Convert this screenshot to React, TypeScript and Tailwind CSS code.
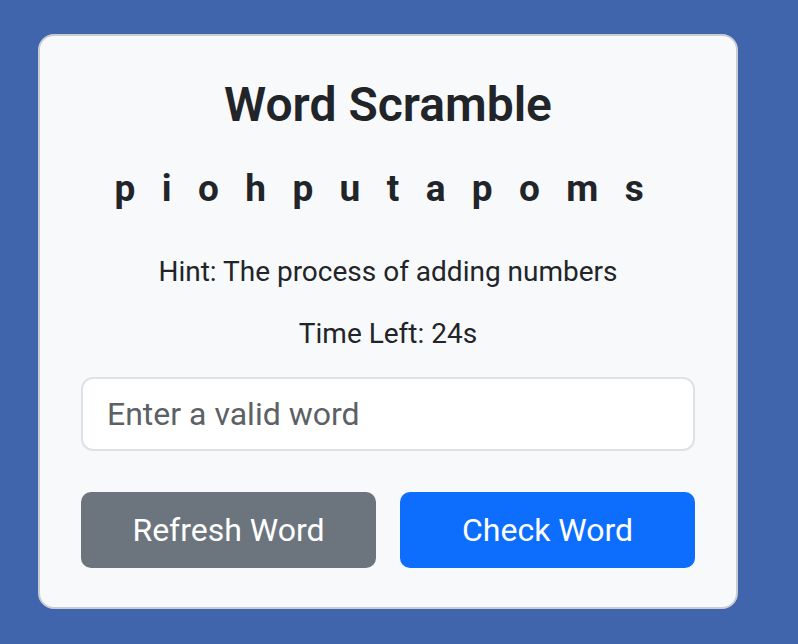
import { useState } from 'react';

const scrambled = 'piohputapoms';

export default function App() {
  const [guess, setGuess] = useState('');

  return (
    <div className="min-h-[644px] w-full bg-[#4065ad] pt-[34px] pl-[38px] font-['Roboto',sans-serif]">
      <div className="w-[700px] rounded-[16px] border-2 border-[#c9cdd2] bg-[#f8f9fa] px-[41px] pt-[40px] pb-[39px] text-center text-[#212529]">
        <h1 className="text-[48px] font-semibold leading-[1.2]">Word Scramble</h1>
        <p className="mt-[33px] pr-[9px] text-[37px] font-bold leading-[1.2] tracking-[8.6px]">
          {scrambled.split('').join(' ')}
        </p>
        <p className="mt-[40px] text-[28px] leading-[1.5]">Hint: The process of adding numbers</p>
        <p className="mt-[20px] text-[28px] leading-[1.5]">Time Left: 24s</p>
        <input
          value={guess}
          onChange={(e) => setGuess(e.target.value)}
          placeholder="Enter a valid word"
          className="mt-[22px] h-[74px] w-full rounded-[12px] border-2 border-[#dee2e6] bg-white px-[24px] text-[32px] text-[#212529] placeholder:text-[#5c6166] outline-none"
        />
        <div className="mt-[41px] grid grid-cols-2 gap-[24px]">
          <button className="h-[76px] rounded-[10px] bg-[#6c757d] text-[32px] text-white">Refresh Word</button>
          <button className="h-[76px] rounded-[10px] bg-[#0d6efd] text-[32px] text-white">Check Word</button>
        </div>
      </div>
    </div>
  );
}
